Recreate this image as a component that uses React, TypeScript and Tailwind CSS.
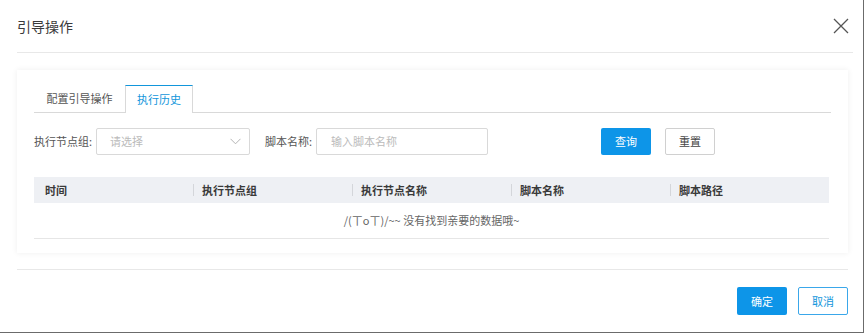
import React from "react";

const font = { fontFamily: '"Noto Sans CJK SC", "Noto Sans", sans-serif' };

const columns = ["时间", "执行节点组", "执行节点名称", "脚本名称", "脚本路径"];

function CloseIcon() {
  return (
    <svg width="16" height="16" viewBox="0 0 16 16" fill="none">
      <path d="M1 1L15 15M15 1L1 15" stroke="#555" strokeWidth="1.3" />
    </svg>
  );
}

function Chevron() {
  return (
    <svg width="11" height="7" viewBox="0 0 11 7" fill="none">
      <path d="M0.5 0.8L5.5 5.8L10.5 0.8" stroke="#b4b4b4" strokeWidth="1" />
    </svg>
  );
}

export default function App() {
  return (
    <div className="h-[334px] w-[865px] bg-white" style={font}>
      <div className="flex h-[333px] w-[864px] flex-col border-r border-b border-[#6b6b6b] bg-white">
        {/* header */}
        <div className="flex h-[52px] items-center justify-between pr-[14px] pl-[17px]">
          <span className="text-[14px] text-[#3a3a3a]">引导操作</span>
          <CloseIcon />
        </div>
        <div className="mr-[10px] ml-[17px] h-px bg-[#e8e8e8]" />

        {/* body card */}
        <div className="mt-[17px] mr-[15px] ml-[17px] h-[183px] bg-white px-[17px] pt-[15px] shadow-[0_0_6px_rgba(0,0,0,0.07)]">
          <div className="flex h-[28px] items-end border-b border-[#d9d9d9] text-[11px]">
            <div className="flex h-[27px] w-[91px] items-center justify-center text-[#555]">配置引导操作</div>
            <div className="-mb-px flex h-[28px] w-[68px] items-center justify-center border-x border-t border-[#d9d9d9] border-t-[#1296db] bg-white text-[#1296db]">
              执行历史
            </div>
          </div>

          <div className="mt-[15px] flex h-[27px] items-center text-[11px]">
            <span className="w-[62px] text-[#555]">执行节点组:</span>
            <div className="flex h-[27px] w-[154px] items-center justify-between rounded-[2px] border border-[#d9d9d9] pr-[8px] pl-[13px]">
              <span className="text-[#bbb]">请选择</span>
              <Chevron />
            </div>
            <span className="ml-[15px] w-[51px] text-[#555]">脚本名称:</span>
            <div className="flex h-[27px] w-[172px] items-center rounded-[2px] border border-[#d9d9d9] pl-[14px]">
              <span className="text-[#bbb]">输入脚本名称</span>
            </div>
            <button className="ml-[113px] h-[27px] w-[50px] rounded-[2px] bg-[#0d95e8] text-[11px] text-white">查询</button>
            <button className="ml-[14px] h-[27px] w-[50px] rounded-[2px] border border-[#d0d0d0] bg-white text-[11px] text-[#444]">重置</button>
          </div>

          <div className="mt-[22px] w-[795px] text-[11px]">
            <div className="grid h-[26px] grid-cols-5 items-center bg-[#eef0f4] font-bold text-[#3a3a3a]">
              {columns.map((c, i) => (
                <div key={c} className="flex items-center">
                  {i > 0 && <span className="mr-[8px] h-[12px] w-px bg-[#d4d6da]" />}
                  <span className={i === 0 ? "pl-[11px]" : ""}>{c}</span>
                </div>
              ))}
            </div>
            <div className="flex h-[36px] items-center justify-center border-b border-[#e6e6e6] text-[#666]">
              /(ㄒoㄒ)/~~ 没有找到亲要的数据哦~
            </div>
          </div>
        </div>

        {/* footer */}
        <div className="mt-[16px] mr-[15px] ml-[17px] h-px bg-[#e8e8e8]" />
        <div className="mt-[17px] flex justify-end gap-[11px] pr-[15px]">
          <button className="h-[28px] w-[50px] rounded-[2px] bg-[#0d95e8] text-[11px] text-white">确定</button>
          <button className="h-[28px] w-[50px] rounded-[2px] border border-[#3aa7ea] bg-white text-[11px] text-[#1296db]">取消</button>
        </div>
      </div>
    </div>
  );
}
